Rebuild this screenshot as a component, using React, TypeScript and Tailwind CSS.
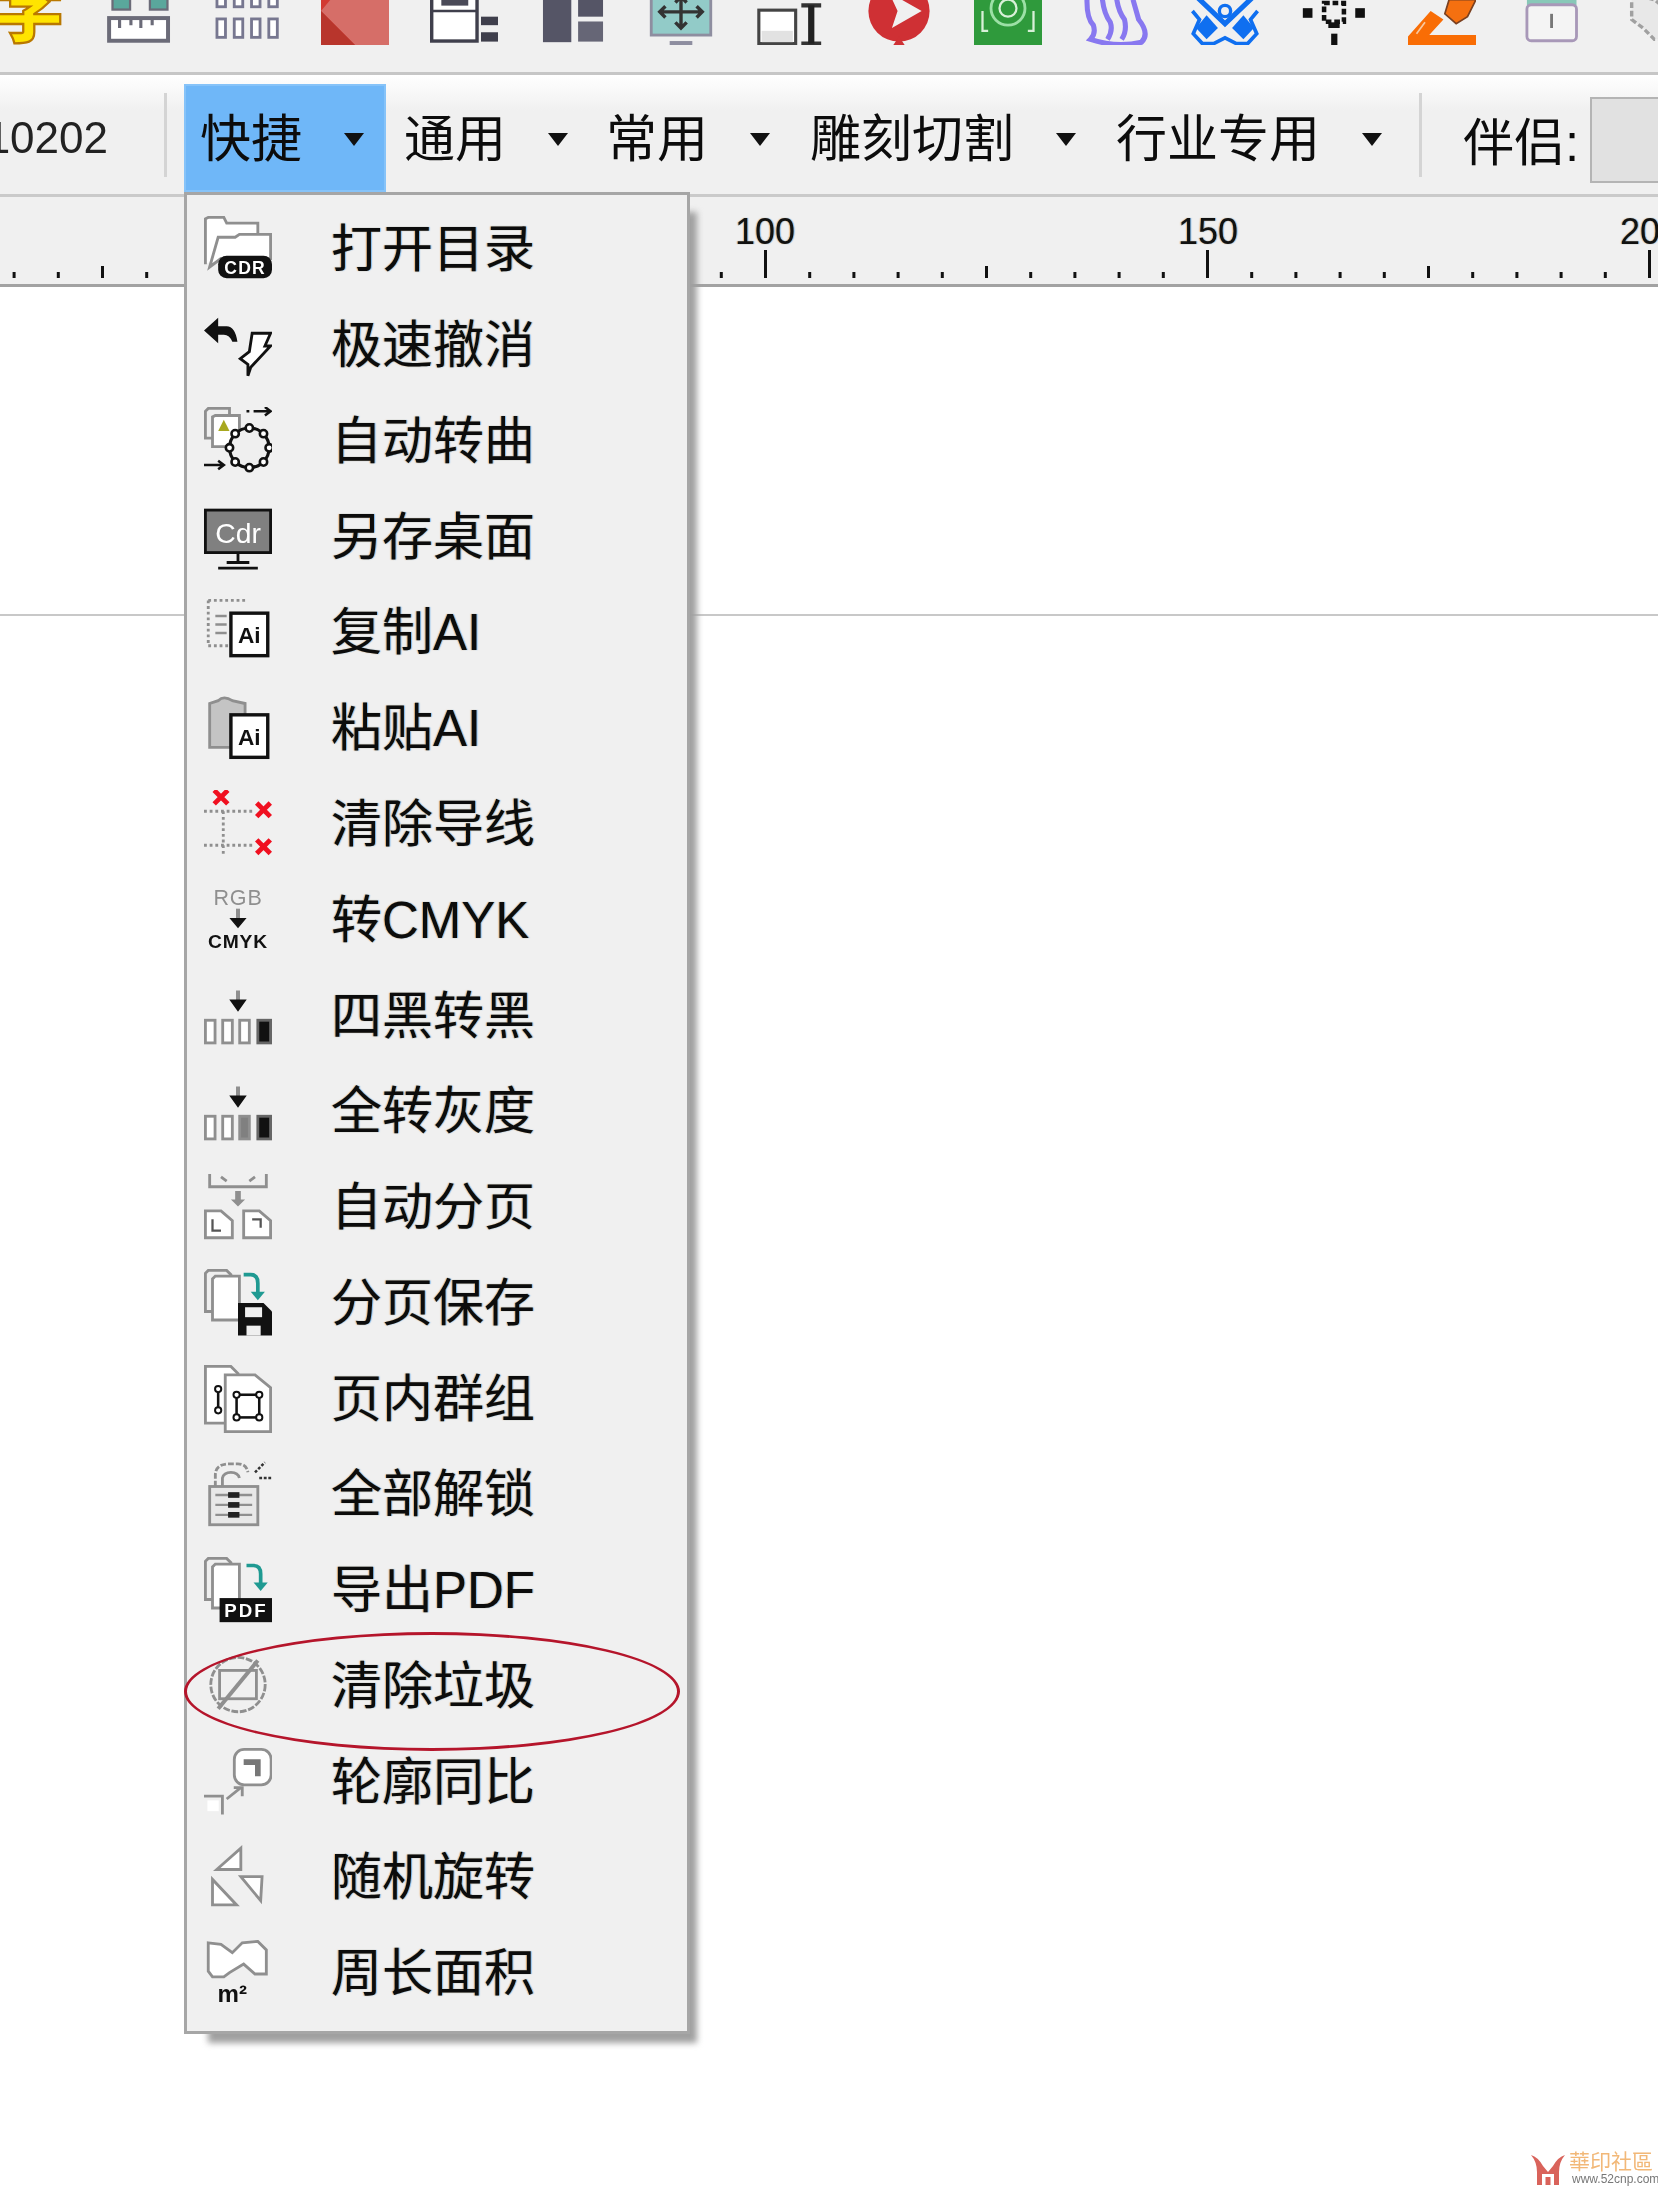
import React from "react";

const Ico = ({ children, className = "" }: { children: React.ReactNode; className?: string }) => (
  <svg viewBox="0 0 24 24" className={`w-[68px] h-[68px] shrink-0 overflow-hidden ${className}`} fill="none">
    {children}
  </svg>
);

const G = "#8f8f8f";
const K = "#111111";

const Dots = ({ d }: { d: string }) => <path d={d} stroke={G} strokeWidth="1" strokeDasharray="1 1" />;

const Pages = () => (
  <>
    <path d="M0.5 15V1.5L1.5 .5H8L9.5 2V15Z" fill="#efefef" stroke={G} />
    <path d="M3 18V3.5L4 2.5H12.5V18Z" fill="#fff" stroke={G} />
  </>
);

const Bars = ({ third }: { third?: boolean }) => (
  <>
    <path d="M12 3V7" stroke={G} strokeWidth="1.4" />
    <path d="M9.5 6.5H14.5L12 10Z" fill={K} stroke={K} strokeWidth=".6" />
    <rect x=".5" y="13.5" width="3.4" height="8" fill="#fff" stroke={G} />
    <rect x="6.6" y="13.5" width="3.4" height="8" fill="#fff" stroke={G} />
    <rect x="12.6" y="13.5" width="3.4" height="8" fill={third ? "#808080" : "#fff"} stroke={G} />
    <rect x="19" y="13.5" width="4.5" height="8" fill={K} stroke="#666" />
  </>
);

const TealArrow = () => (
  <>
    <path d="M14 2H16.5Q19 2 19 5V9" stroke="#1f9a92" strokeWidth="1.3" />
    <path d="M16.5 8H21.5L19 11Z" fill="#1f9a92" />
  </>
);

const AiDoc = ({ y }: { y: number }) => (
  <>
    <rect x="9.5" y={y} width="13" height="15" fill="#fff" stroke={K} strokeWidth="1.2" />
    <text x="16" y={y + 10.5} fontSize="8" fontWeight="700" fill={K} textAnchor="middle">Ai</text>
  </>
);

const RedX = ({ x, y }: { x: number; y: number }) => (
  <path d={`M${x - 2.4} ${y - 2.4}L${x + 2.4} ${y + 2.4}M${x + 2.4} ${y - 2.4}L${x - 2.4} ${y + 2.4}`} stroke="#f01020" strokeWidth="1.7" />
);

const menuItems: { label: string; icon: React.ReactNode }[] = [
  {
    label: "打开目录",
    icon: (
      <>
        <path d="M.5 17V1L1.5.5H7L8 2.5H19V8" fill="#fff" stroke={G} />
        <path d="M2 18L5 7.5H11L12.5 6.5H23.5V15H6Z" fill="#fff" stroke={G} />
        <rect x="5" y="14" width="19" height="8" rx="3" fill={K} />
        <text x="14.5" y="20.3" fontSize="6.2" fontWeight="700" fill="#fff" textAnchor="middle" letterSpacing=".4">CDR</text>
      </>
    ),
  },
  {
    label: "极速撤消",
    icon: (
      <>
        <path d="M0 6.5L5 2V5H8Q11 5 11.8 10.5H10Q9 8 7 8H5V11Z" fill={K} />
        <path d="M17 7.5H23.5L21.5 12H23.5L16.5 19.5L15.5 22.5V18.5L12.8 16.5L16 14Z" fill="#fff" stroke={K} />
      </>
    ),
  },
  {
    label: "自动转曲",
    icon: (
      <>
        <path d="M.5 11V1.5L1.5.5H9V11Z" fill="#efefef" stroke={G} />
        <path d="M3 14V3.5L4 3H12.5V14Z" fill="#fff" stroke={G} />
        <path d="M5 8.5L7 4.5L9 8.5Z" fill="#a8a820" />
        <circle cx="16" cy="14.4" r="7" fill="#efefef" stroke={K} strokeWidth="1.1" />
        {[[16, 7.4], [21, 9.4], [23, 14.4], [21, 19.4], [16, 21.4], [11, 19.4], [9, 14.4], [11, 9.4]].map(([x, y]) => (
          <circle key={`${x}-${y}`} cx={x} cy={y} r="1.3" fill="#fff" stroke={K} strokeWidth=".9" />
        ))}
        <path d="M15 1.5H16M17.5 1.5H23M21.5 0L23.5 1.5L21.5 3" stroke={K} strokeWidth=".9" />
        <path d="M0 20.5H6.5M5 19L7 20.5L5 22" stroke={K} strokeWidth=".9" />
      </>
    ),
  },
  {
    label: "另存桌面",
    icon: (
      <>
        <rect x=".5" y="2.5" width="23" height="15" fill="#808080" stroke={K} />
        <text x="12" y="14" fontSize="10" fill="#fff" textAnchor="middle">Cdr</text>
        <path d="M12 18V21M8 21H16M5 23H19" stroke={K} strokeWidth="1" />
      </>
    ),
  },
  {
    label: "复制AI",
    icon: (
      <>
        <path d="M1.5.5H15M1.5.5V16.5H9" stroke={G} strokeWidth="1" strokeDasharray="1 1" />
        <path d="M4 6H8M4 9H8M4 12H8" stroke={G} strokeWidth=".8" />
        <AiDoc y={5} />
      </>
    ),
  },
  {
    label: "粘贴AI",
    icon: (
      <>
        <path d="M2 18.5V3L5 2Q7 0 10 2L14.5 3V8H9.5V18.5Z" fill="#c4c4c4" stroke={G} />
        <AiDoc y={7} />
      </>
    ),
  },
  {
    label: "清除导线",
    icon: (
      <>
        <Dots d="M0 7.5H17M0 19.5H17M6.8 7.5V23" />
        <RedX x={6} y={2.5} />
        <RedX x={21} y={7} />
        <RedX x={21} y={20} />
      </>
    ),
  },
  {
    label: "转CMYK",
    icon: (
      <>
        <text x="12" y="6.6" fontSize="7.6" fill={G} textAnchor="middle" letterSpacing=".3">RGB</text>
        <path d="M12 8V12" stroke={G} strokeWidth="1.4" />
        <path d="M9.5 11.5H14.5L12 14.5Z" fill={K} stroke={K} strokeWidth=".5" />
        <text x="12" y="22" fontSize="6.8" fontWeight="700" fill={K} textAnchor="middle" letterSpacing=".3">CMYK</text>
      </>
    ),
  },
  { label: "四黑转黑", icon: <Bars /> },
  { label: "全转灰度", icon: <Bars third /> },
  {
    label: "自动分页",
    icon: (
      <>
        <path d="M2 0V4.5H22V0" stroke={G} />
        <path d="M6 1L8 2.5M18 1L16 2.5" stroke={G} />
        <path d="M11 6V9H9.5L12 11.5L14.5 9H13V6Z" fill={G} />
        <path d="M.5 22.5V13H6L10 16.5V22.5Z" fill="#fff" stroke={G} />
        <path d="M14 22.5V13H19.5L23.5 16.5V22.5Z" fill="#fff" stroke={G} />
        <path d="M3 16V20H6" stroke="#555" strokeWidth=".8" />
        <path d="M17 16H20V19" stroke="#555" strokeWidth=".8" />
      </>
    ),
  },
  {
    label: "分页保存",
    icon: (
      <>
        <Pages />
        <TealArrow />
        <path d="M12 12H21L24 15V23.5H12Z" fill={K} />
        <rect x="14.5" y="13.5" width="6" height="3.5" fill="#efefef" />
        <rect x="15" y="20" width="5" height="3.5" fill="#efefef" />
      </>
    ),
  },
  {
    label: "页内群组",
    icon: (
      <>
        <path d="M.5 20.5V.5H9.5L12 3V20.5Z" fill="#fff" stroke={G} />
        <path d="M7.5 23.5V3.5H18L23.5 8V23.5Z" fill="#fff" stroke={G} />
        <path d="M5 9V16" stroke={K} strokeWidth=".9" />
        <circle cx="5" cy="8.5" r="1.1" fill="#fff" stroke={K} strokeWidth=".7" />
        <circle cx="5" cy="16" r="1.1" fill="#fff" stroke={K} strokeWidth=".7" />
        <rect x="11.5" y="10.5" width="8" height="8" stroke={K} strokeWidth=".9" />
        {[[11.5, 10.5], [19.5, 10.5], [11.5, 18.5], [19.5, 18.5]].map(([x, y]) => (
          <circle key={`${x}-${y}`} cx={x} cy={y} r="1.1" fill="#fff" stroke={K} strokeWidth=".7" />
        ))}
      </>
    ),
  },
  {
    label: "全部解锁",
    icon: (
      <>
        <path d="M4 9V5Q4 1 9 1H12Q15 1 15.5 4" stroke={G} strokeDasharray="2 .7" />
        <path d="M6.5 9V6Q7 4 9.5 4Q12 4 12.5 6" stroke={G} />
        <rect x="2" y="9" width="17" height="13.5" fill="#e8e8e8" stroke={G} />
        <path d="M4 12H17M4 15.5H17M4 19H17" stroke={G} strokeWidth=".8" />
        <rect x="8.5" y="11" width="4" height="2" fill="#222" />
        <rect x="8.5" y="14.5" width="4" height="2" fill="#222" />
        <rect x="8.5" y="18" width="4" height="2" fill="#222" />
        <path d="M18 4L21.5.5M19.5 6H24" stroke="#333" strokeWidth=".9" strokeDasharray="1 .6" />
      </>
    ),
  },
  {
    label: "导出PDF",
    icon: (
      <>
        <Pages />
        <g transform="translate(1 1)">
          <TealArrow />
        </g>
        <rect x="5.5" y="14.5" width="18.5" height="8.5" fill={K} />
        <text x="14.8" y="21.3" fontSize="6.6" fontWeight="700" fill="#fff" textAnchor="middle" letterSpacing=".7">PDF</text>
      </>
    ),
  },
  {
    label: "清除垃圾",
    icon: (
      <>
        <circle cx="12" cy="11.5" r="9.6" stroke={G} strokeWidth="1" strokeDasharray="2.4 .6" />
        <rect x="5.5" y="6.5" width="13" height="10" stroke={G} />
        <path d="M19 3L5 20" stroke={G} strokeWidth="1.4" />
      </>
    ),
  },
  {
    label: "轮廓同比",
    icon: (
      <>
        <rect x="10.7" y=".5" width="13" height="12.5" rx="3.5" fill="#fff" stroke={G} />
        <path d="M14 4H20V10H18V6H14Z" fill="#777" />
        <path d="M8 18L13 14M10.5 14H13.5V17" stroke={G} />
        <path d="M0 17H6.5V23.5" stroke={G} />
        <rect x="1.2" y="18.5" width="4" height="3.8" fill="#fff" />
      </>
    ),
  },
  {
    label: "随机旋转",
    icon: (
      <>
        <path d="M13 1.5V9H4.5Z" fill="#fff" stroke={G} />
        <path d="M13 11.5H20.5L20 20Z" fill="#fff" stroke={G} />
        <path d="M3 12.5V21.5H11.5Z" fill="#fff" stroke={G} />
      </>
    ),
  },
  {
    label: "周长面积",
    icon: (
      <>
        <path d="M1.5 1L6 1.5L10 4.5L13.5 1L19 .5L22 3.5V12H18L14 8.5L9 11.5L7 13H3L1.5 11Z" fill="#fff" stroke={G} />
        <text x="10" y="22" fontSize="8.5" fontWeight="700" fill={K} textAnchor="middle">m²</text>
      </>
    ),
  },
];

// only the lower part of these shows, the shot cuts them off at y = 0
const topIcons: React.ReactNode[] = [
  <text x="12" y="21" fontSize="25" fontWeight="900" fill="#ffe400" stroke="#b97800" strokeWidth=".8" textAnchor="middle">字</text>,
  <>
    <rect x="3" y="4" width="6.2" height="7.5" fill="#5aa79c" stroke="#6b6b78" strokeWidth=".8" />
    <rect x="16.2" y="4" width="6.2" height="7.5" fill="#5aa79c" stroke="#6b6b78" strokeWidth=".8" />
    <rect x="1.8" y="14.5" width="20.8" height="8" fill="#fff" stroke="#6b6b78" strokeWidth="1.4" />
    <path d="M5.5 14.5V18M9.5 14.5V17M13 14.5V18M17 14.5V17" stroke="#6b6b78" strokeWidth="1.1" />
  </>,
  <>
    {[1.4, 7.5, 13.6, 19.7].map((x) => (
      <React.Fragment key={x}>
        <rect x={x} y="4" width="3" height="6.5" fill="#fff" stroke="#777790" />
        <rect x={x} y="14.8" width="3" height="6.5" fill="#fff" stroke="#777790" />
      </React.Fragment>
    ))}
  </>,
  <>
    <rect x="0" y="0" width="24" height="24" fill="#d23a32" />
    <path d="M0 12L10 0H24V24H12Z" fill="#d66e68" />
    <path d="M0 12L12 24H0Z" fill="#b8352c" />
  </>,
  <>
    <rect x=".6" y="2" width="16" height="20.6" fill="#fff" stroke="#3f3f4c" strokeWidth="1.2" />
    <rect x="4" y="7.5" width="9.5" height="2.6" fill="#4a4a58" />
    <path d="M.6 12H16.6" stroke="#3f3f4c" strokeWidth=".8" />
    <rect x="18" y="14" width="6" height="3" fill="#3f3f4c" />
    <rect x="18" y="19.5" width="6" height="3.3" fill="#3f3f4c" />
  </>,
  <>
    <rect x="1.4" y="2" width="10" height="21" fill="#555566" />
    <rect x="13.8" y="2" width="8.8" height="12" fill="#555566" />
    <rect x="13.8" y="15.7" width="8.8" height="7.1" fill="#666676" />
  </>,
  <>
    <rect x="1.5" y="2" width="21" height="18.5" fill="#92cbc8" stroke="#8e8ea0" strokeWidth="1" />
    <path d="M12 7V18M4.5 12.3H19.5M10 9L12 7L14 9M10 16L12 18L14 16M6.5 10.3L4.5 12.3L6.5 14.3M17.5 10.3L19.5 12.3L17.5 14.3" stroke="#333" strokeWidth="1.2" />
    <path d="M8 23.3H16" stroke="#8e8ea0" strokeWidth="1.4" />
  </>,
  <>
    <rect x="1" y="11.7" width="13" height="11.8" fill="#fff" stroke="#444" strokeWidth="1.1" />
    <rect x="2" y="19" width="11" height="4" fill="#e2e2e2" />
    <path d="M16 10H23M16 23.5H23" stroke="#333" strokeWidth="1.5" />
    <path d="M19.5 10V23.5" stroke="#222" strokeWidth="2.2" />
  </>,
  <>
    <circle cx="12" cy="12" r="10.8" fill="#cf3034" />
    <path d="M8.5 5.5L20 12L9.5 18L11.5 12Z" fill="#f0f0f0" />
    <path d="M12 21L10 24H14Z" fill="#cf3034" />
  </>,
  <>
    <rect x="0" y="0" width="24" height="24" fill="#2f9a3c" />
    <circle cx="12" cy="11" r="6" stroke="#9ce0a6" strokeWidth="1" />
    <circle cx="12" cy="11" r="3" stroke="#d8f0d8" strokeWidth=".8" />
    <path d="M3 12V19H5M21 12V19H19" stroke="#d8f0d8" strokeWidth=".8" />
  </>,
  <>
    <path d="M2 4Q1 14 4 17Q5 20 3 22Q12 25 21 23Q24 20 20 15L18 8M7 4Q7 12 10 16Q11 19 9 22M12 4Q12 11 15 15Q16 19 14 22" stroke="#8878f0" strokeWidth="1.8" />
  </>,
  <>
    <path d="M1 6L12 16.5L23 6M23 6L12 16.5" stroke="#0f6ff0" strokeWidth="1.8" />
    <circle cx="12" cy="12" r="2" stroke="#0f6ff0" strokeWidth="1.2" />
    <path d="M.5 12L3 15L.8 20L4 23.5H8L12 21.5L16 23.5H20L23.2 20L21 15L23.5 12" stroke="#0f6ff0" strokeWidth="1.3" />
    <path d="M5.5 13.5L9.5 18L5.5 22L1.8 18Z" fill="#0f6ff0" />
    <path d="M18.5 13.5L22.2 18L18.5 22L14.5 18Z" fill="#0f6ff0" />
  </>,
  <>
    <rect x="1" y="11" width="3.4" height="3.4" fill={K} />
    <rect x="19.5" y="11" width="3.4" height="3.4" fill={K} />
    <rect x="8.5" y="9.2" width="7" height="6.6" stroke={K} strokeWidth="1.6" strokeDasharray="2 1" />
    <rect x="10" y="16" width="4" height="2" fill={K} />
    <rect x="11" y="20" width="2.2" height="4" fill={K} />
  </>,
  <>
    <path d="M14.5 8H24L21 14L17 16.5L13 13Z" fill="#f57010" stroke="#7a4020" strokeWidth=".6" />
    <path d="M8 12L0 21V24H24V20.5H7.5L12.5 15Z" fill="#f96d05" />
    <path d="M6 16L3 20" stroke="#f8c8a0" strokeWidth=".6" />
  </>,
  <>
    <rect x="3.5" y="6" width="17.5" height="4" fill="#88c8b8" />
    <rect x="3.5" y="9.8" width="17.5" height="12.7" rx="1.5" fill="#f4f4f4" stroke="#a898b8" strokeWidth="1" />
    <path d="M12.2 13V18" stroke="#777" strokeWidth="1" />
  </>,
  <path d="M2 6L10 8L15 12L20 14L18 22H10L6 18L2 15Z" fill="#e8e8e8" stroke="#a0a0a0" strokeWidth="1.2" strokeDasharray="2 1" />,
];

const TB_TEXT = "text-[51px] leading-none text-[#0c0c0c] whitespace-nowrap";
const FRINGE = "[text-shadow:-1px_0_1px_rgba(225,135,30,0.55),1px_0_1px_rgba(30,135,230,0.55)]";

const Arrow = () => <span className="w-0 h-0 border-l-[10px] border-r-[10px] border-t-[13px] border-l-transparent border-r-transparent border-t-[#111] shrink-0 mt-[2px]" />;

const ToolMenu = ({ label, active, className = "pl-[18px]" }: { label: string; active?: boolean; className?: string }) => (
  <div
    className={`flex items-center h-[108px] self-start mt-[9px] gap-[42px] pr-[20px] ${className} ${
      active ? "bg-[#6fb7f8] border-2 border-[#86c3f9]" : ""
    }`}
  >
    <span className={`${TB_TEXT} pt-[3px]`}>{label}</span>
    <Arrow />
  </div>
);

const Separator = () => <div className="w-[3px] h-[84px] bg-[#d4d4d4] shrink-0" />;

const rulerTicks = Array.from({ length: 38 }, (_, k) => k);

const App = () => {
  return (
    <div className="relative w-[1658px] h-[2187px] overflow-hidden bg-white font-['Liberation_Sans','Noto_Sans_CJK_SC',sans-serif] blur-[0.7px]">
      {/* icon row, cut off at the top of the shot */}
      <div className="h-[75px] bg-[#f0f0f0] border-b-[3px] border-[#c6c6c6] overflow-hidden flex items-end pb-[27px] -ml-[25px]">
        {topIcons.map((icon, i) => (
          <div key={i} className="w-[108.7px] shrink-0 flex justify-center">
            <Ico>{icon}</Ico>
          </div>
        ))}
      </div>

      {/* menu toolbar */}
      <div className="h-[122px] flex items-center bg-gradient-to-b from-white to-[#f0f0f0] to-30% border-b-[3px] border-[#cacaca] overflow-hidden">
        <div className="w-[164px] pr-[56px] shrink-0 flex justify-end overflow-hidden mt-[6px]">
          <span className="text-[44px] leading-none text-[#222] shrink-0">10202</span>
        </div>
        <Separator />
        <div className="w-[17px] shrink-0" />
        <ToolMenu label="快捷" active className="pl-[14px]" />
        <ToolMenu label="通用" />
        <ToolMenu label="常用" />
        <ToolMenu label="雕刻切割" className="pl-[20px]" />
        <ToolMenu label="行业专用" className="pl-[20px]" />
        <div className="w-[17px] shrink-0" />
        <Separator />
        <span className={`${TB_TEXT} ml-[41px] mt-[18px]`}>伴侣:</span>
        <div className="ml-[11px] w-[80px] h-[86px] mt-[11px] bg-[#e1e1e1] border-2 border-[#b4b4b4] shrink-0" />
      </div>

      {/* ruler */}
      <div className="relative h-[90px] bg-[#f0f0f0] border-b-[3px] border-[#a2a2a2]">
        <svg width="1658" height="87" className="absolute inset-0">
          {rulerTicks.map((k) => {
            const x = 1649.5 - 44.2 * k;
            const top = k % 10 === 0 ? 53 : k % 5 === 0 ? 69 : 75;
            return <line key={k} x1={x} x2={x} y1={top} y2={81} stroke="#111" strokeWidth="3" />;
          })}
        </svg>
        {[
          { label: "100", x: 765 },
          { label: "150", x: 1208 },
          { label: "200", x: 1650 },
        ].map((r) => (
          <span
            key={r.label}
            className={`absolute top-[17px] -translate-x-1/2 text-[36px] leading-[36px] text-[#111] ${FRINGE}`}
            style={{ left: r.x }}
          >
            {r.label}
          </span>
        ))}
      </div>

      {/* page edge on the canvas */}
      <div className="h-[329px] border-b-2 border-[#c8c8c8]" />

      {/* soft shadow sits offset behind the dropdown */}
      <div className="absolute left-[208px] top-[212px] w-[489px] h-[1831px] bg-[#a0a0a0] blur-[3px]" />

      {/* open dropdown */}
      <div className="absolute left-[184px] top-[192px] w-[506px] h-[1842px] bg-[#f0f0f0] border-[3px] border-[#a6a6a6] pt-[7px]">
        {menuItems.map((item) => (
          <div key={item.label} className="h-[95.78px] flex items-center pl-[17px]">
            <Ico>{item.icon}</Ico>
            <span className={`ml-[59px] text-[51px] leading-none text-[#0c0c0c] whitespace-nowrap ${FRINGE}`}>{item.label}</span>
          </div>
        ))}
      </div>

      {/* hand-drawn annotation ring */}
      <div className="absolute left-[184px] top-[1632px] w-[496px] h-[119px] rounded-[50%] border-[3px] border-[#b5152b]" />

      {/* site watermark */}
      <div className="absolute left-[1530px] top-[2150px] flex items-end gap-[3px]">
        <svg viewBox="0 0 36 34" className="w-[36px] h-[34px]">
          <path d="M1 3Q8 5 13 14L18 20L23 14Q28 5 35 3Q29 10 29 20V33H24V22H12V33H7V20Q7 10 1 3Z" fill="#d9635b" />
          <rect x="15.5" y="25" width="5" height="8" fill="#d9635b" />
        </svg>
        <div className="flex flex-col items-start">
          <span className="text-[21px] leading-[21px] text-[#f2b878] font-['Noto_Sans_CJK_TC',sans-serif]">華印社區</span>
          <span className="text-[12px] leading-[14px] text-[#777] font-['Liberation_Sans',sans-serif] ml-[3px] mt-[1px]">www.52cnp.com</span>
        </div>
      </div>
    </div>
  );
};

export default App;
